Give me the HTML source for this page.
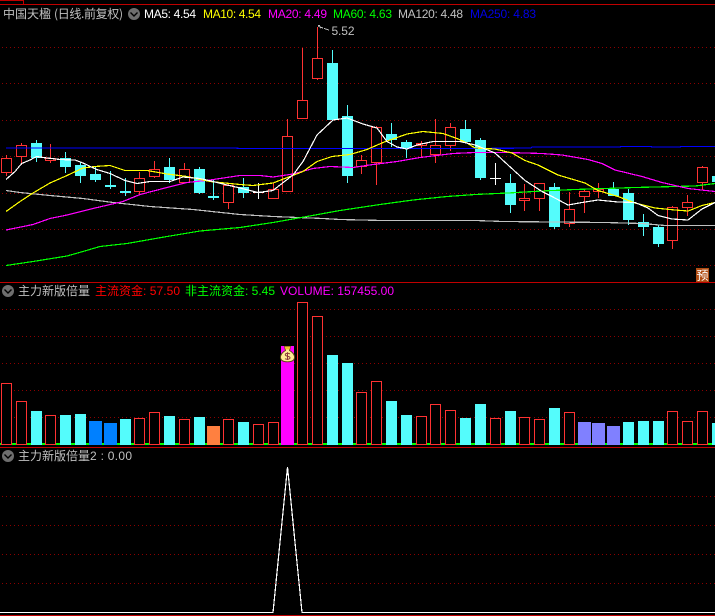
<!DOCTYPE html>
<html lang="zh">
<head>
<meta charset="utf-8">
<title>主力新版倍量</title>
<style>
html,body{margin:0;padding:0;background:#000;width:715px;height:616px;overflow:hidden}
svg{display:block;position:absolute;left:0;top:0}
text{font-family:"Liberation Sans","WenQuanYi Zen Hei","Noto Sans CJK SC",sans-serif;font-size:12px;white-space:pre}
.cn{font-family:"WenQuanYi Zen Hei","Noto Sans CJK SC",sans-serif}
.g{stroke:#8c0000;stroke-width:1;stroke-dasharray:1 3;fill:none}
.l{fill:none;stroke-width:1.2}
.r{fill:#000;stroke:#ff3232;stroke-width:1}
.w{stroke:#ff3232;stroke-width:1}
.c{fill:#54fcfc}
.cw{stroke:#54fcfc;stroke-width:1}
</style>
</head>
<body>
<svg width="715" height="616" viewBox="0 0 715 616" xmlns="http://www.w3.org/2000/svg" shape-rendering="crispEdges">
<rect width="715" height="616" fill="#000"/>
<!-- frame lines -->
<path d="M0 4.5H715M0 .5H23.5V4M0 282.5H715M0 447.5H715M0 615.5H715" stroke="#c00000" fill="none"/>

<!-- grid -->
<path class="g" d="M2 47.5H715M2 83.5H715M2 120.5H715M2 156.5H715M2 193.5H715M2 229.5H715M2 265.5H715"/>
<path class="g" d="M2 309.5H715M2 336.5H715M2 363.5H715M2 390.5H715M2 417.5H715"/>
<path class="g" d="M2 496.5H715M2 525.5H715M2 554.5H715M2 583.5H715"/>

<!-- candle wicks red -->
<path class="w" d="M6.5 155V176M21.5 143V165M50.5 144V163M139.5 172V194M154.5 161V178M184.5 163V183M228.5 183V209M273.5 183V198M287.5 119V192M302.5 48V119M317.5 27V80M361.5 155V174M376.5 126V185M421.5 141V157M435.5 119V163M450.5 123V151M524.5 184V211M539.5 183V211M569.5 192V227M584.5 190V213M598.5 183V198M672.5 206V249M687.5 195V216M702.5 166V190"/>
<!-- candle bodies red -->
<g class="r">
<rect x="1.5" y="158.5" width="10" height="14"/>
<rect x="16.5" y="145.5" width="10" height="11"/>
<rect x="45.5" y="158.5" width="10" height="2"/>
<rect x="134.5" y="178.5" width="10" height="13"/>
<rect x="149.5" y="169.5" width="10" height="7"/>
<rect x="179.5" y="169.5" width="10" height="13"/>
<rect x="223.5" y="185.5" width="10" height="17"/>
<rect x="268.5" y="189.5" width="10" height="9"/>
<rect x="282.5" y="136.5" width="10" height="55"/>
<rect x="297.5" y="100.5" width="10" height="18"/>
<rect x="312.5" y="58.5" width="10" height="20"/>
<rect x="356.5" y="160.5" width="10" height="6"/>
<rect x="371.5" y="127.5" width="10" height="35"/>
<rect x="416.5" y="143.5" width="10" height="2"/>
<rect x="430.5" y="145.5" width="10" height="9"/>
<rect x="445.5" y="127.5" width="10" height="18"/>
<rect x="519.5" y="198.5" width="10" height="2"/>
<rect x="534.5" y="183.5" width="10" height="15"/>
<rect x="564.5" y="209.5" width="10" height="14"/>
<rect x="579.5" y="191.5" width="10" height="5"/>
<rect x="593.5" y="189.5" width="10" height="2"/>
<rect x="667.5" y="207.5" width="10" height="33"/>
<rect x="682.5" y="202.5" width="10" height="5"/>
<rect x="697.5" y="167.5" width="10" height="15"/>
</g>
<!-- candle wicks cyan -->
<path class="cw" d="M36.5 140V162M65.5 152V173M80.5 162V183M95.5 167V182M110.5 171V189M125.5 178V196M169.5 158V183M199.5 167V194M213.5 180V200M243.5 178V198M332.5 50V120M347.5 105V183M391.5 123V147M406.5 140V158M465.5 120V142M480.5 138V180M510.5 174V213M554.5 183V229M613.5 182V196M628.5 189V225M643.5 214V236M658.5 225V247"/>
<!-- candle bodies cyan -->
<g class="c">
<rect x="31" y="143" width="11" height="15"/>
<rect x="60" y="158" width="11" height="9"/>
<rect x="75" y="165" width="11" height="11"/>
<rect x="90" y="174" width="11" height="6"/>
<rect x="105" y="185" width="11" height="2"/>
<rect x="120" y="191" width="11" height="2"/>
<rect x="164" y="167" width="11" height="13"/>
<rect x="194" y="169" width="11" height="24"/>
<rect x="208" y="196" width="11" height="2"/>
<rect x="238" y="187" width="11" height="6"/>
<rect x="327" y="63" width="11" height="57"/>
<rect x="342" y="116" width="11" height="60"/>
<rect x="386" y="134" width="11" height="6"/>
<rect x="401" y="142" width="11" height="6"/>
<rect x="460" y="129" width="11" height="13"/>
<rect x="475" y="140" width="11" height="38"/>
<rect x="505" y="183" width="11" height="22"/>
<rect x="549" y="187" width="11" height="40"/>
<rect x="608" y="189" width="11" height="7"/>
<rect x="623" y="193" width="11" height="27"/>
<rect x="638" y="222" width="11" height="5"/>
<rect x="653" y="227" width="11" height="17"/>
<rect x="712" y="176" width="3" height="6"/>
</g>
<!-- white dojis -->
<path d="M258.5 183V199M253 192.5H264M495.5 163V185M490 178.5H501" stroke="#fff" fill="none"/>

<!-- MA250 -->
<polyline class="l" stroke="#0000ff" points="6,148 235,148 240,148.5 475,148.5 531,148 532,147 620,147 621,146.5 651,146.5 652,147 680,147 681,146.5 715,146.5"/>
<!-- MA120 -->
<polyline class="l" stroke="#c0c0c0" points="6,190.5 20,192.5 50,195.5 83,198.5 113,202.5 150,206.5 193,209.5 240,214.5 273,216.5 323,218.5 340,219.5 383,220.5 475,220.5 503,221.5 605,222.5 642,223.5 665,225.5 715,225.5"/>
<!-- MA60 -->
<polyline class="l" stroke="#00ff00" points="6,265.5 33,261.5 67,256 83,251.5 100,246.5 127,243.5 167,236.5 200,231 240,227.5 273,222.5 307,216.5 340,210.5 380,204.5 413,200 447,196.5 475,194.5 508,193 542,191 575,189.5 635,187.5 695,186 715,183.5"/>
<!-- MA20 -->
<polyline class="l" stroke="#ff00ff" points="6,230 33,224.5 50,218.5 67,215 93,208.5 123,201.5 140,194.5 167,187.5 187,182.5 210,180 240,175.5 260,175.5 273,177 293,174 313,168.5 330,166.5 353,167.5 373,164.5 397,161.5 420,157.5 453,153.5 475,152.5 508,152.5 542,153.5 562,155 588,159.5 602,163.5 615,170 642,176.5 662,182.5 688,188.5 715,191.5"/>
<!-- MA10 -->
<polyline class="l" stroke="#ffff00" points="6,211.5 20,201.5 33,193 50,183 67,175.5 83,168 95,166.5 110,165.5 125,170.5 147,170.5 167,174 187,176.5 210,181.5 240,184.5 253,185.5 273,183 290,176.5 303,171.5 317,161.5 332,156.5 350,154.5 367,149.5 383,142.5 407,134 423,131.5 443,133.5 457,138.5 467,143 475,148 495,149 512,153 525,160.5 538,165 558,175 585,183 598,190.5 618,196.5 635,203 655,208 675,210 688,211 702,205.5 715,202.5"/>
<!-- MA5 -->
<polyline class="l" stroke="#ffffff" points="6,179.5 15,171.5 21.7,163.5 30,160 36.7,156.5 43,157.5 60,159.5 75,160 83,163 96.7,169.5 110,173.5 125,180.5 137,183.5 150,181.5 170,181.5 183,177 200,178.5 213,181.5 227,185 240,188 258,192.5 273,190.5 280,185 293,175 303,161.5 317,135 333,120 347,118 363,124 377,128 387,141.5 397,147 407,149 417,145 433,141.5 460,141.5 475,145 495,153 508,165 525,180.5 542,191.5 552,196.5 568,205 582,202.5 598,200 618,202 635,202.5 648,208 658,215.5 672,219 688,220 702,209 715,202.5"/>

<!-- high label -->
<path d="M318 25.5H320M318 25.5L321 28M320 27L323 28M324 28.5L329 30" stroke="#c0c0c0" fill="none"/>
<text x="331.5" y="35" fill="#c0c0c0" textLength="23" lengthAdjust="spacing" shape-rendering="auto">5.52</text>

<!-- 预 -->
<rect x="696" y="268" width="13" height="14" fill="#b04c12"/>
<text class="cn" x="696.5" y="279.5" fill="#fff" style="font-size:12px" shape-rendering="auto">预</text>

<!-- Header text -->
<g shape-rendering="auto">
<text class="cn" x="3" y="18" fill="#c0c0c0">中国天楹</text>
<text class="cn" x="54" y="18" fill="#c0c0c0" textLength="69" lengthAdjust="spacing">(日线.前复权)</text>
<circle cx="134" cy="14" r="6" fill="#6e6e6e"/>
<path d="M130.5 12.5L134 16L137.5 12.5" stroke="#000" stroke-width="1.4" fill="none"/>
<text x="144" y="18" fill="#ffffff" textLength="52" lengthAdjust="spacing">MA5: 4.54</text>
<text x="203" y="18" fill="#ffff00" textLength="58" lengthAdjust="spacing">MA10: 4.54</text>
<text x="268" y="18" fill="#ff00ff" textLength="59" lengthAdjust="spacing">MA20: 4.49</text>
<text x="333" y="18" fill="#00ff00" textLength="59" lengthAdjust="spacing">MA60: 4.63</text>
<text x="398" y="18" fill="#c0c0c0" textLength="65" lengthAdjust="spacing">MA120: 4.48</text>
<text x="470" y="18" fill="#0000e6" textLength="66" lengthAdjust="spacing">MA250: 4.83</text>
</g>

<!-- Volume panel: green base -->
<rect x="0" y="443" width="715" height="2" fill="#00ff00"/>
<!-- red bars -->
<g class="r">
<rect x="1.5" y="383.5" width="10" height="61"/>
<rect x="16.5" y="401.5" width="10" height="43"/>
<rect x="45.5" y="415.5" width="10" height="29"/>
<rect x="134.5" y="418.5" width="10" height="26"/>
<rect x="149.5" y="412.5" width="10" height="32"/>
<rect x="179.5" y="419.5" width="10" height="25"/>
<rect x="223.5" y="419.5" width="10" height="25"/>
<rect x="253.5" y="424.5" width="10" height="20"/>
<rect x="268.5" y="422.5" width="10" height="22"/>
<rect x="297.5" y="302.5" width="10" height="142"/>
<rect x="312.5" y="316.5" width="10" height="128"/>
<rect x="356.5" y="392.5" width="10" height="52"/>
<rect x="371.5" y="381.5" width="10" height="63"/>
<rect x="416.5" y="416.5" width="10" height="28"/>
<rect x="430.5" y="404.5" width="10" height="40"/>
<rect x="445.5" y="410.5" width="10" height="34"/>
<rect x="490.5" y="418.5" width="10" height="26"/>
<rect x="519.5" y="417.5" width="10" height="27"/>
<rect x="534.5" y="419.5" width="10" height="25"/>
<rect x="564.5" y="412.5" width="10" height="32"/>
<rect x="667.5" y="411.5" width="10" height="33"/>
<rect x="682.5" y="421.5" width="10" height="23"/>
<rect x="697.5" y="411.5" width="10" height="33"/>
</g>
<!-- cyan bars -->
<g class="c">
<rect x="31" y="411" width="11" height="34"/>
<rect x="60" y="415" width="11" height="30"/>
<rect x="75" y="414" width="11" height="31"/>
<rect x="120" y="419" width="11" height="26"/>
<rect x="164" y="416" width="11" height="29"/>
<rect x="194" y="417" width="11" height="28"/>
<rect x="238" y="422" width="11" height="23"/>
<rect x="327" y="355" width="11" height="90"/>
<rect x="342" y="363" width="11" height="82"/>
<rect x="386" y="401" width="11" height="44"/>
<rect x="401" y="415" width="11" height="30"/>
<rect x="460" y="418" width="11" height="27"/>
<rect x="475" y="404" width="11" height="41"/>
<rect x="505" y="411" width="11" height="34"/>
<rect x="549" y="408" width="11" height="37"/>
<rect x="623" y="422" width="11" height="23"/>
<rect x="638" y="421" width="11" height="24"/>
<rect x="653" y="421" width="11" height="24"/>
<rect x="712" y="423" width="3" height="22"/>
</g>
<!-- blue, orange, purple, magenta -->
<rect x="89" y="421" width="13" height="24" fill="#0080ff"/>
<rect x="104" y="423" width="13" height="22" fill="#0080ff"/>
<rect x="207" y="426" width="13" height="19" fill="#ff8040"/>
<rect x="578" y="422" width="13" height="23" fill="#8080ff"/>
<rect x="592" y="423" width="13" height="22" fill="#8080ff"/>
<rect x="607" y="426" width="13" height="19" fill="#8080ff"/>
<rect x="281" y="346" width="13" height="99" fill="#ff00ff"/>
<!-- money bag -->
<g shape-rendering="auto">
<path d="M284.5 346.5H290.5L289.5 350.5C292.5 352 295 355 294.5 358C294 360.8 291.5 361.8 287.5 361.8C283.5 361.8 281 360.8 280.5 358C280 355 282.5 352 285.5 350.5Z" fill="#ffeb96" stroke="#5c4010" stroke-width=".9"/>
<path d="M284.5 346.5H290.5L289.5 349.5H285.5Z" fill="#f0c030"/>
<path d="M290 354C288.5 352.8 285.3 353 285.3 354.8C285.3 356.8 290 355.8 290 357.8C290 359.3 286.8 359.8 285 358.7M287.5 352.3V360" stroke="#8a3a3a" stroke-width="1" fill="none"/>
</g>

<!-- Panel 2 header -->
<g shape-rendering="auto">
<circle cx="8" cy="291" r="6" fill="#6e6e6e"/>
<path d="M4.5 289.5L8 293L11.5 289.5" stroke="#000" stroke-width="1.4" fill="none"/>
<text class="cn" x="18" y="295" fill="#c0c0c0">主力新版倍量</text>
<text class="cn" x="95" y="295" fill="#ff0000">主流资金</text>
<text x="143" y="295" fill="#ff0000" textLength="37" lengthAdjust="spacing">: 57.50</text>
<text class="cn" x="185" y="295" fill="#00ff00">非主流资金</text>
<text x="245" y="295" fill="#00ff00" textLength="30" lengthAdjust="spacing">: 5.45</text>
<text x="280" y="295" fill="#ff00ff" textLength="114" lengthAdjust="spacing">VOLUME: 157455.00</text>
</g>

<!-- Panel 3 header -->
<g shape-rendering="auto">
<circle cx="8" cy="456" r="6" fill="#6e6e6e"/>
<path d="M4.5 454.5L8 458L11.5 454.5" stroke="#000" stroke-width="1.4" fill="none"/>
<text class="cn" x="18" y="460" fill="#c0c0c0">主力新版倍量</text>
<text x="90" y="460" fill="#c0c0c0" textLength="42" lengthAdjust="spacing">2 : 0.00</text>
</g>
<!-- Panel 3 spike -->
<polyline class="l" stroke="#ffffff" points="0,612.5 273,612.5 287.5,467 302,612.5 715,612.5"/>
</svg>
</body>
</html>
